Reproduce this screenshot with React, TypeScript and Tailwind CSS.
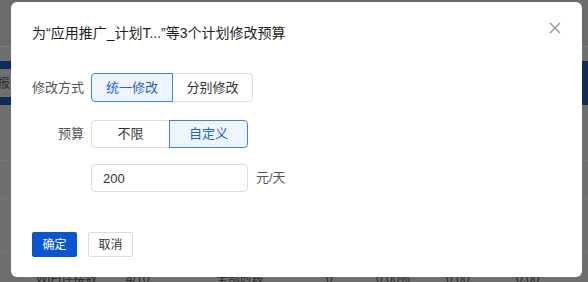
import React, { useState } from "react";

// segmented option group, one selected
function Segmented({
  options,
  value,
  onChange,
  widths,
  height,
}: {
  options: string[];
  value: string;
  onChange: (v: string) => void;
  widths: string[];
  height: string;
}) {
  return (
    <div className={`flex ${height}`}>
      {options.map((opt, i) => {
        const active = opt === value;
        const edge =
          i === 0 ? "rounded-l-[4px]" : i === options.length - 1 ? "rounded-r-[4px] -ml-px" : "-ml-px";
        return (
          <button
            key={opt}
            onClick={() => onChange(opt)}
            className={`${widths[i]} ${edge} border text-[13px] flex items-center justify-center ${
              active
                ? "relative z-10 border-[#3f82ee] bg-[#eef5ff] text-[#1a64d8]"
                : "border-[#d9dde4] bg-white text-[#333]"
            }`}
          >
            {opt}
          </button>
        );
      })}
    </div>
  );
}

export default function App() {
  const [mode, setMode] = useState("统一修改");
  const [budget, setBudget] = useState("自定义");
  const [amount, setAmount] = useState("200");

  return (
    <div
      className="relative w-[588px] h-[282px] overflow-hidden bg-[#6f6f6f]"
      style={{ fontFamily: '"Liberation Sans", "Noto Sans CJK SC", sans-serif' }}
    >
      {/* page behind the overlay */}
      <div className="h-[47px] bg-[#6b6b6b] border-b border-[#7b7b7b]" />
      <div className="h-[14px]" />
      <div className="h-[44px] flex">
        <div className="w-[11px] flex flex-col overflow-hidden">
          <div className="h-[8px] bg-[#0d2c5c]" />
          <div className="flex-1 text-[13px] leading-[28px] text-[#2b2b2b] -ml-[3px]">报</div>
          <div className="h-[8px] bg-[#0d2c5c]" />
        </div>
        <div className="flex-1" />
        <div className="w-[6px] bg-[#0d2c5c]" />
      </div>
      <div className="h-[56px] border-b border-[#767676]" />
      <div className="h-[38px] border-b border-[#767676]" />
      <div className="h-[54px] border-b border-[#767676]" />
      <div className="flex text-[12px] leading-[14px] text-[#2b2b2b] pt-[19px]">
        <span className="ml-[36px] w-[90px]">WIFI连接数</span>
        <span className="w-[90px]">4/10</span>
        <span className="w-[110px]">全部时段</span>
        <span className="w-[50px]">0</span>
        <span className="w-[70px]">0.00%</span>
        <span className="w-[70px]">0.00</span>
        <span>0.00</span>
      </div>

      {/* modal */}
      <div className="absolute left-[11px] top-[2px] w-[571px] h-[275px] bg-white rounded-[6px] px-[21px] pt-[21px]">
        <button className="absolute right-[21px] top-[20px] w-[12px] h-[12px] text-[#8d939c]">
          <svg viewBox="0 0 12 12" width="12" height="12" fill="none" stroke="currentColor" strokeWidth="1.3">
            <path d="M1 1L11 11M11 1L1 11" />
          </svg>
        </button>

        <div className="h-5 text-[14px] leading-5 text-[#1f1f1f]">
          为“应用推广_计划T...”等3个计划修改预算
        </div>

        <div className="mt-[30px] flex items-center">
          <div className="w-[52px] text-right text-[13px] text-[#555]">修改方式</div>
          <div className="ml-[7px]">
            <Segmented
              options={["统一修改", "分别修改"]}
              value={mode}
              onChange={setMode}
              widths={["w-[82px]", "w-[81px]"]}
              height="h-[29px]"
            />
          </div>
        </div>

        <div className="mt-[18px] flex items-center">
          <div className="w-[52px] text-right text-[13px] text-[#555]">预算</div>
          <div className="ml-[7px]">
            <Segmented
              options={["不限", "自定义"]}
              value={budget}
              onChange={setBudget}
              widths={["w-[79px]", "w-[79px]"]}
              height="h-[28px]"
            />
          </div>
        </div>

        <div className="mt-[16px] flex items-center pl-[59px]">
          <input
            value={amount}
            onChange={(e) => setAmount(e.target.value)}
            className="w-[157px] h-[28px] border border-[#d9dde4] rounded-[4px] px-[11px] text-[13px] text-[#333] outline-none"
          />
          <span className="ml-[8px] text-[13px] text-[#555]">元/天</span>
        </div>

        <div className="mt-[40px] flex gap-[11px]">
          <button className="w-[45px] h-[25px] rounded-[2px] bg-[#0a55d0] text-white text-[12px]">确定</button>
          <button className="w-[45px] h-[25px] rounded-[2px] border border-[#d9dde4] bg-white text-[#333] text-[12px]">
            取消
          </button>
        </div>
      </div>
    </div>
  );
}
